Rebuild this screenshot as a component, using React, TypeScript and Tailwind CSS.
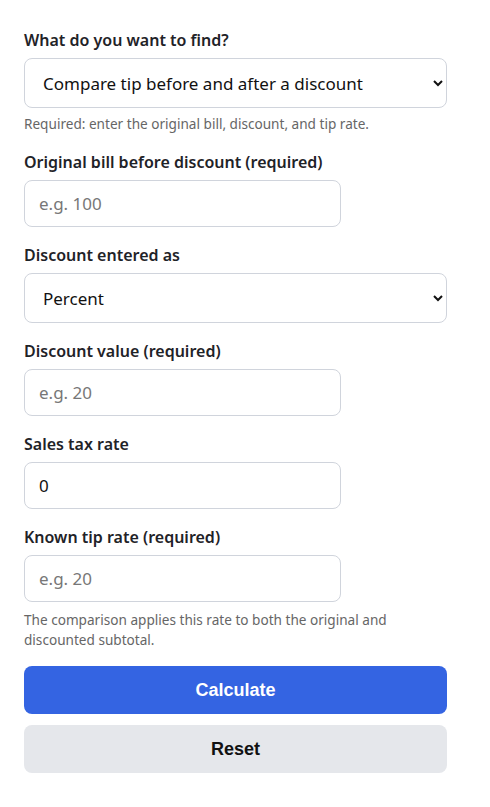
import React from "react";

const font = { fontFamily: '"Noto Sans", "Open Sans", sans-serif' };

function Label({ children }: { children: React.ReactNode }) {
  return (
    <label className="block text-[16px] leading-6 font-semibold text-[#1f2328] mb-1.5">
      {children}
    </label>
  );
}

function Field({ label, placeholder, value, help }: { label: string; placeholder?: string; value?: string; help?: string }) {
  return (
    <div>
      <Label>{label}</Label>
      <input
        type="text"
        placeholder={placeholder}
        defaultValue={value}
        className="block w-3/4 h-[47px] px-3.5 rounded-lg border border-[#d0d4dc] bg-white text-[17px] text-[#111] placeholder:text-[#777] outline-none"
      />
      {help && <p className="mt-2 text-[13.6px] leading-5 text-[#666]">{help}</p>}
    </div>
  );
}

function SelectField({ label, value, options, help }: { label: string; value: string; options: string[]; help?: string }) {
  return (
    <div>
      <Label>{label}</Label>
      <select
        defaultValue={value}
        className="block w-full h-[50px] pl-3.5 pr-2 rounded-lg border border-[#d0d4dc] bg-white text-[17px] text-[#111] outline-none"
      >
        {options.map((o) => (
          <option key={o}>{o}</option>
        ))}
      </select>
      {help && <p className="mt-1.5 text-[13.6px] leading-5 text-[#666]">{help}</p>}
    </div>
  );
}

export default function App() {
  return (
    <div className="bg-white min-h-screen" style={font}>
      <div className="px-6 pt-7 pb-8 w-[471px] flex flex-col gap-4">
        <SelectField
          label="What do you want to find?"
          value="Compare tip before and after a discount"
          options={["Compare tip before and after a discount", "Tip amount"]}
          help="Required: enter the original bill, discount, and tip rate."
        />
        <Field label="Original bill before discount (required)" placeholder="e.g. 100" />
        <SelectField label="Discount entered as" value="Percent" options={["Percent", "Amount"]} />
        <Field label="Discount value (required)" placeholder="e.g. 20" />
        <Field label="Sales tax rate" value="0" />
        <Field
          label="Known tip rate (required)"
          placeholder="e.g. 20"
          help="The comparison applies this rate to both the original and discounted subtotal."
        />
        <div className="flex flex-col gap-[11px]" style={{ fontFamily: '"Liberation Sans", Arial, sans-serif' }}>
          <button className="h-12 w-full rounded-lg bg-[#3464e2] text-white text-[18px] font-bold">Calculate</button>
          <button className="h-12 w-full rounded-lg bg-[#e5e7eb] text-[#111] text-[18px] font-bold">Reset</button>
        </div>
      </div>
    </div>
  );
}
